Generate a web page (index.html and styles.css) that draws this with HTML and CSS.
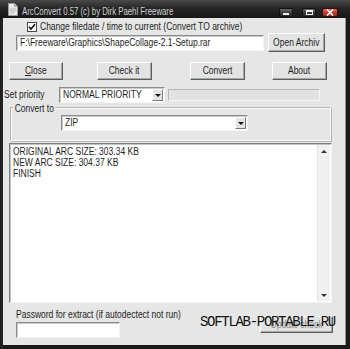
FILE: index.html
```html
<!DOCTYPE html>
<html>
<head>
<meta charset="utf-8">
<link rel="stylesheet" href="styles.css">
</head>
<body>
<div class="window">
  <div class="titlebar">
    <span class="app-icon">
      <svg width="10" height="13" viewBox="0 0 10 13"><path d="M0.5 0.5H6.5L9.5 3.5V12.5H0.5Z" fill="#e8e8e8" stroke="#9a9a9a"/><path d="M6.5 0.5V3.5H9.5" fill="#cfcfcf" stroke="#9a9a9a"/><path d="M2 6H8M2 8H8M2 10H6" stroke="#b5b5b5" stroke-width="1"/></svg>
    </span>
    <span class="title t">ArcConvert 0.57 (c) by Dirk Paehl Freeware</span>
    <div class="winbtns">
      <span class="wb wb-min"><span class="glyph-min"></span></span>
      <span class="wb wb-max"><span class="glyph-max"></span></span>
      <span class="wb wb-close">
        <svg width="8" height="7" viewBox="0 0 8 7"><path d="M1 0.5L7 6.5M7 0.5L1 6.5" stroke="#fff" stroke-width="1.6"/></svg>
      </span>
    </div>
  </div>
  <div class="frame">
    <div class="client">
      <div class="row row-check">
        <span class="checkbox">
          <svg width="8" height="8" viewBox="0 0 8 8"><path d="M1 3.8L3 6L7 1.2" fill="none" stroke="#111" stroke-width="1.6"/></svg>
        </span>
        <span class="check-label t">Change filedate / time to current (Convert TO archive)</span>
      </div>
      <div class="row row-file">
        <div class="field field-file"><span class="t">F:\Freeware\Graphics\ShapeCollage-2.1-Setup.rar</span></div>
        <button class="btn btn-open"><span class="t tc">Open Archiv</span></button>
      </div>
      <div class="row row-buttons">
        <button class="btn btn-close"><span class="t tc"><u>C</u>lose</span></button>
        <button class="btn btn-check"><span class="t tc">Check it</span></button>
        <button class="btn btn-convert"><span class="t tc">Convert</span></button>
        <button class="btn btn-about"><span class="t tc">About</span></button>
      </div>
      <div class="row row-priority">
        <span class="prio-label"><span class="t">Set priority</span></span>
        <div class="field select sel-priority"><span class="sel-text"><span class="t">NORMAL PRIORITY</span></span><span class="sel-arrow"></span></div>
        <div class="progress"></div>
      </div>
      <div class="group">
        <div class="legend t">Convert to</div>
        <div class="field select sel-zip"><span class="sel-text"><span class="t">ZIP</span></span><span class="sel-arrow"></span></div>
      </div>
      <div class="log">
        <div class="log-text">
          <div class="t">ORIGINAL ARC SIZE: 303.34 KB</div>
          <div class="t">NEW ARC SIZE: 304.37 KB</div>
          <div class="t">FINISH</div>
        </div>
        <div class="scrollbar">
          <span class="sb-up"></span>
          <span class="sb-down"></span>
        </div>
      </div>
      <div class="row row-bottom">
        <div class="pw">
          <div class="pw-label"><span class="t">Password for extract (if autodectect not run)</span></div>
          <div class="field field-pw"></div>
        </div>
        <button class="btn btn-update"><span class="t tc">Update check</span></button>
      </div>
    </div>
  </div>
  <div class="watermark">SOFTLAB-PORTABLE.RU</div>
</div>
</body>
</html>
```
FILE: styles.css
```css
* { box-sizing: border-box; }
html, body { margin: 0; padding: 0; background: #1b1b1b; }
body {
  font-family: "Liberation Sans", Arial, sans-serif;
  font-size: 10px;
  color: #1e1e1e;
}
.t {
  display: inline-block;
  white-space: nowrap;
  transform: scaleX(0.85);
  transform-origin: 0 50%;
}
.tc { transform-origin: 50% 50%; }
.window {
  position: relative;
  width: 350px;
  height: 349px;
  display: flex;
  flex-direction: column;
  background: #1c1c1c;
  overflow: hidden;
}
.titlebar {
  height: 18px;
  flex: none;
  display: flex;
  align-items: flex-start;
  background: linear-gradient(#4a4a4a, #262626 45%, #161616);
}
.app-icon { margin: 3px 0 0 8px; height: 13px; width: 10px; display: block; }
.app-icon svg { display: block; }
.title {
  margin: 6px 0 0 4px;
  line-height: 12px;
  font-size: 10px;
  color: #cfcfcf;
  transform: scaleX(0.78);
}
.winbtns { margin: 8px 0 0 auto; display: flex; padding-right: 12px; }
.wb {
  width: 14px; height: 9px;
  border-radius: 2px;
  display: flex; align-items: center; justify-content: center;
  border: 1px solid #111;
  background: linear-gradient(#6a6a6a, #3a3a3a 55%, #2a2a2a);
}
.wb-min { margin-right: 9px; }
.wb-max { margin-right: 6px; }
.wb-close { width: 16px; background: linear-gradient(#e06a5a, #c0362a 55%, #9e2418); border-color: #3a0d08; }
.wb-close svg { display: block; }
.glyph-min { width: 6px; height: 2px; background: #eee; margin-top: 3px; }
.glyph-max { width: 7px; height: 5px; border: 1px solid #eee; border-top-width: 2px; }

.frame {
  flex: 1;
  padding: 0 4px 4px 3px;
  background: linear-gradient(90deg, #1a1a1a, #2a2a2a 2px, #1a1a1a 3px);
  display: flex;
}
.client {
  flex: 1;
  background: #e6e6e6;
  border-right: 1px solid #9a9a9a;
}
.row { display: flex; align-items: center; }

.row-check { margin-top: 3px; height: 12px; padding-left: 24px; }
.checkbox {
  width: 10px; height: 10px;
  background: #fff;
  border: 1px solid #4a4a4a;
  display: flex; align-items: center; justify-content: center;
  flex: none;
}
.checkbox svg { display: block; }
.check-label { margin-left: 3px; line-height: 12px; }

.field {
  background: #fff;
  border: 1px solid;
  border-color: #8c8c8c #f4f4f4 #f4f4f4 #8c8c8c;
  box-shadow: inset 1px 1px 0 #c9c9c9;
  line-height: 14px;
  white-space: nowrap;
  overflow: hidden;
}
.row-file { height: 19px; padding-left: 13px; }
.field-file { width: 248px; height: 16px; padding-left: 3px; }

.btn {
  font: inherit;
  color: #1e1e1e;
  background: #e3e3e3;
  border: 1px solid;
  border-color: #ffffff #5e5e5e #5e5e5e #ffffff;
  box-shadow: inset -1px -1px 0 #a6a6a6;
  padding: 0;
  line-height: 14px;
  text-align: center;
  white-space: nowrap;
  overflow: visible;
}
.btn u { text-decoration: underline; }
.btn-open { margin-left: 4px; width: 57px; height: 19px; }

.row-buttons { margin-top: 10px; height: 18px; padding-left: 6px; }
.row-buttons .btn { height: 18px; }
.btn-close { width: 54px; }
.btn-check { width: 55px; margin-left: 34px; }
.btn-convert { width: 55px; margin-left: 38px; }
.btn-about { width: 55px; margin-left: 27px; }

.row-priority { margin-top: 7px; height: 16px; padding-left: 1px; }
.prio-label { width: 55px; line-height: 12px; white-space: nowrap; flex: none; }
.select { display: flex; align-items: center; height: 16px; }
.sel-text { flex: 1; padding-left: 3px; line-height: 14px; overflow: hidden; }
.sel-arrow {
  width: 11px; height: 12px;
  margin-right: 1px;
  background: #e4e4e4;
  border: 1px solid;
  border-color: #fff #7a7a7a #7a7a7a #fff;
  position: relative;
  flex: none;
}
.sel-arrow::after {
  content: "";
  position: absolute;
  left: 2px; top: 4px;
  border-left: 3px solid transparent;
  border-right: 3px solid transparent;
  border-top: 3px solid #111;
}
.sel-priority { width: 106px; flex: none; }
.progress {
  margin-left: 3px;
  width: 152px; height: 12px;
  background: #e2e2e2;
  border: 1px solid;
  border-color: #b8b8b8 #f6f6f6 #f6f6f6 #b8b8b8;
}

.group {
  margin: 4px 0 0 7px;
  width: 321px;
  height: 34px;
  border: 1px solid;
  border-color: #b4b4b4 #f8f8f8 #f8f8f8 #b4b4b4;
  box-shadow: inset 1px 1px 0 #f8f8f8, 1px 1px 0 #b4b4b4;
}
.legend {
  display: table;
  margin: -6px 0 0 2px;
  padding: 0 2px;
  line-height: 13px;
  background: #e6e6e6;
}
.sel-zip { margin-left: 50px; width: 187px; }

.log {
  margin: 2px 0 0 6px;
  width: 323px;
  height: 160px;
  background: #fff;
  border: 1px solid;
  border-color: #7c7c7c #f2f2f2 #f2f2f2 #7c7c7c;
  box-shadow: inset 1px 1px 0 #c4c4c4;
  display: flex;
}
.log-text { flex: 1; padding: 2px 0 0 3px; line-height: 11px; }
.log-text .t { display: block; width: max-content; }
.scrollbar {
  width: 13px;
  margin: 1px 1px 1px 0;
  background: #f0f0f0;
  border-left: 1px solid #e4e4e4;
  display: flex;
  flex-direction: column;
  justify-content: space-between;
  align-items: center;
  padding: 5px 0 4px;
}
.sb-up, .sb-down { width: 0; height: 0; border-left: 3px solid transparent; border-right: 3px solid transparent; }
.sb-up { border-bottom: 3px solid #333; }
.sb-down { border-top: 3px solid #333; }

.row-bottom { align-items: flex-start; }
.pw { padding-left: 13px; }
.pw-label { margin-top: 5px; line-height: 13px; white-space: nowrap; }
.field-pw { margin-top: 1px; width: 104px; height: 16px; }
.btn-update { margin: 13px 12px 0 auto; width: 73px; height: 17px; color: #8a8a8a; }

.watermark {
  position: absolute;
  left: 200px;
  top: 315px;
  font-family: "Liberation Mono", "Courier New", monospace;
  font-size: 14px;
  letter-spacing: -1.3px;
  line-height: 14px;
  color: #111;
  white-space: nowrap;
}
```
